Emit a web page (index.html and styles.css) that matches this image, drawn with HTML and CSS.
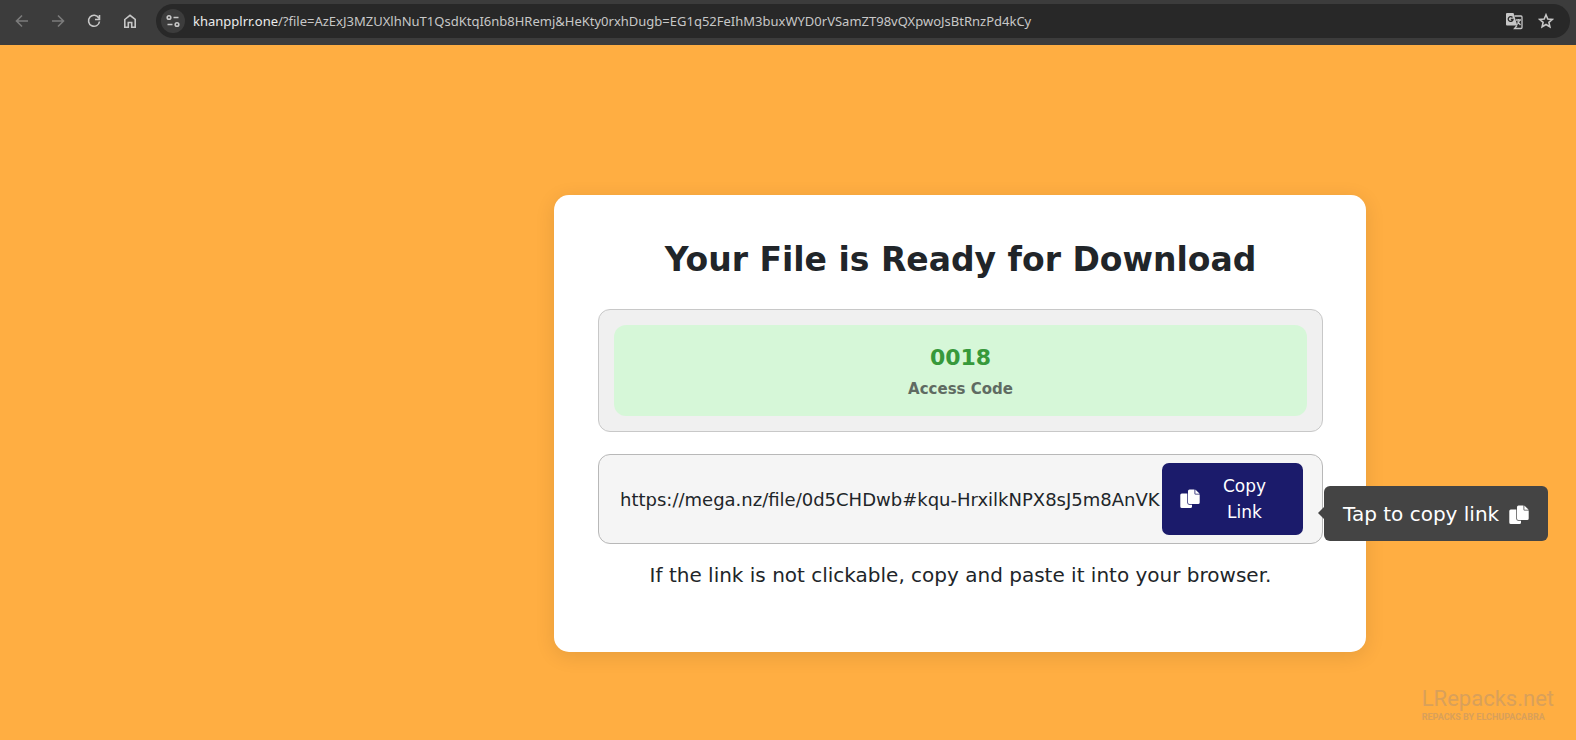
FILE: index.html
```html
<!DOCTYPE html>
<html lang="en">
<head>
<meta charset="utf-8">
<title>Your File is Ready for Download</title>
<link rel="stylesheet" href="styles.css">
</head>
<body>
<svg class="sprite" aria-hidden="true">
  <symbol id="copy" viewBox="0 0 20 20">
    <path fill="currentColor" d="M1.800 4.500H7.300V13.800a2 2 0 0 0 2 2H12v1.700a1.500 1.500 0 0 1-1.500 1.500H1.800A1.500 1.500 0 0 1 .3 17.500V6a1.500 1.500 0 0 1 1.500-1.500z"/>
    <path fill="currentColor" d="M9.500.500H14.500V4.500a1 1 0 0 0 1 1h4.200v8a1.500 1.500 0 0 1-1.500 1.500H9.500A1.500 1.500 0 0 1 8 13.500V2A1.500 1.500 0 0 1 9.500.500z"/>
    <path fill="currentColor" d="M15.300 .500L19.700 4.800H15.300z"/>
  </symbol>
</svg>
<header class="toolbar">
  <nav class="nav">
    <button class="nav-btn dim" aria-label="Back"><svg viewBox="0 0 16 16"><path d="M14 8H2.500M8 2.500L2.500 8 8 13.500"/></svg></button>
    <button class="nav-btn dim" aria-label="Forward"><svg viewBox="0 0 16 16"><path d="M2 8h11.500M8 2.500L13.500 8 8 13.500"/></svg></button>
    <button class="nav-btn" aria-label="Reload"><svg viewBox="0 0 16 16"><path d="M12.800 5A5.500 5.500 0 1 0 13.500 8.500M13.500 2v4.500H9"/></svg></button>
    <button class="nav-btn" aria-label="Home"><svg viewBox="0 0 16 16"><path d="M2.800 6.500L8 2.300l5.200 4.200v7.700h-3.500V9.500H6.300v4.700H2.800z"/></svg></button>
  </nav>
  <div class="address">
    <button class="site-info" aria-label="Site information"><svg viewBox="0 0 16 16"><circle cx="4" cy="4.500" r="1.800"/><path d="M8.500 4.500h5M2.500 11.500h5"/><circle cx="12" cy="11.500" r="1.800"/></svg></button>
    <span class="url"><span class="host">khanpplrr.one</span>/?file=AzExJ3MZUXlhNuT1QsdKtqI6nb8HRemj&amp;HeKty0rxhDugb=EG1q52FeIhM3buxWYD0rVSamZT98vQXpwoJsBtRnzPd4kCy</span>
    <button class="nav-btn" aria-label="Translate"><svg class="wide" viewBox="0 0 18 18"><path class="solid" d="M2 1h6.500l3.800 12.500H2A1 1 0 0 1 1 12.500V2a1 1 0 0 1 1-1z"/><path d="M9.500 4H16a1 1 0 0 1 1 1v10.500a1 1 0 0 1-1 1H9.500l2.500-3M11 8h5M13.500 7v1c2 0-.500 4-1.500 4.500M12.500 9.500l3 3.500"/><path class="cut" d="M7.500 5.500a2.400 2.400 0 1 0 .5 2H5.800"/></svg></button>
    <button class="nav-btn" aria-label="Bookmark this page"><svg viewBox="0 0 16 16"><path d="M8 1.800l1.800 4.200 4.500.400-3.400 3 1 4.400L8 11.500l-3.900 2.300 1-4.400-3.400-3 4.500-.400z"/></svg></button>
  </div>
</header>
<main class="page">
  <section class="card">
    <h1 class="title">Your File is Ready for Download</h1>
    <div class="code-box">
      <div class="code-panel">
        <strong class="code">0018</strong>
        <span class="code-label">Access Code</span>
      </div>
    </div>
    <div class="link-box">
      <input class="link-field" type="text" readonly aria-label="Download link" value="https://mega.nz/file/0d5CHDwb#kqu-HrxilkNPX8sJ5m8AnVK">
      <button class="copy-btn"><svg class="copy-icon"><use href="#copy"/></svg><span class="copy-text">Copy Link</span></button>
      <div class="tooltip" role="tooltip">Tap to copy link <svg class="copy-icon"><use href="#copy"/></svg></div>
    </div>
    <p class="hint">If the link is not clickable, copy and paste it into your browser.</p>
  </section>
  <div class="watermark">
    <span class="mark-name">LRepacks.net</span>
    <span class="mark-sub">REPACKS BY ELCHUPACABRA</span>
  </div>
</main>
</body>
</html>
```
FILE: styles.css
```css
* { box-sizing: border-box; }
body {
  margin: 0;
  min-height: 100vh;
  display: flex;
  flex-direction: column;
  background: #ffae42;
  color: #212529;
  font-family: Verdana, "DejaVu Sans", sans-serif;
}
button { border: 0; padding: 0; background: none; font: inherit; color: inherit; }
.sprite { display: none; }

.toolbar {
  display: flex;
  align-items: center;
  gap: 8px;
  height: 45px;
  padding: 0 6px 3px 12px;
  background: #3c3c3c;
  color: #c7c7c7;
}
.nav { display: flex; gap: 16px; }
.nav-btn { display: grid; place-items: center; width: 20px; height: 20px; }
.nav-btn svg, .site-info svg {
  width: 16px;
  height: 16px;
  fill: none;
  stroke: currentColor;
  stroke-width: 1.6;
}
.nav-btn .wide { width: 18px; height: 18px; stroke-width: 1.3; }
.nav-btn .solid { fill: currentColor; stroke: none; }
.nav-btn .cut { stroke: #282828; }
.dim { color: #7b7b7b; }
.address {
  flex: 1;
  min-width: 0;
  display: flex;
  align-items: center;
  gap: 12px;
  height: 34px;
  margin-left: 8px;
  padding: 0 14px 0 5px;
  border-radius: 17px;
  background: #282828;
}
.site-info {
  display: grid;
  place-items: center;
  flex: none;
  width: 24px;
  height: 24px;
  margin-right: -4px;
  border-radius: 50%;
  background: #3c3c3c;
}
.url {
  flex: 1;
  min-width: 0;
  overflow: hidden;
  white-space: nowrap;
  font: 13px/20px "Segoe UI", "Noto Sans", sans-serif;
}
.host { color: #ececec; }

.page {
  flex: 1;
  display: grid;
  grid-template-columns: 554fr 812fr 210fr;
  grid-template-rows: auto 1fr;
  padding-top: 150px;
}
.card {
  grid-column: 2;
  min-width: 0;
  padding: 44px 43px 62px 44px;
  border-radius: 15px;
  background: #fff;
  box-shadow: 0 4px 20px rgba(0, 0, 0, .1);
  text-align: center;
}
.title { margin: 0 0 28px; font-size: 33px; line-height: 42px; }
.code-box {
  margin-bottom: 22px;
  padding: 15px;
  border: 1px solid #c8c8c8;
  border-radius: 12px;
  background: #f0f0f0;
}
.code-panel {
  display: flex;
  flex-direction: column;
  gap: 4px;
  padding: 17px 16px 15px;
  border-radius: 12px;
  background: #d6f7d8;
}
.code { color: #37993b; font-size: 22px; line-height: 31px; }
.code-label { color: #5f6b62; font-size: 15px; font-weight: bold; line-height: 24px; }
.link-box {
  position: relative;
  display: flex;
  align-items: center;
  padding: 8px 19px 8px 21px;
  border: 1px solid #b8b8b8;
  border-radius: 12px;
  background: #f5f5f5;
}
.link-field {
  flex: 1;
  min-width: 0;
  height: 40px;
  padding: 0;
  border: 0;
  outline: 0;
  background: transparent;
  color: #212529;
  font: 18px/26px Verdana, "DejaVu Sans", sans-serif;
}
.copy-btn {
  display: flex;
  align-items: center;
  width: 141px;
  padding: 10px 18px;
  border-radius: 7px;
  background: #1b1b6b;
  color: #fff;
  font-size: 17px;
  line-height: 26px;
}
.copy-icon { flex: none; width: 20px; height: 20px; }
.copy-text { flex: 1; padding: 0 10px 0 14px; }
.tooltip {
  position: absolute;
  left: 100%;
  top: 31px;
  display: flex;
  align-items: center;
  gap: 10px;
  margin-left: 2px;
  padding: 13px 19px 11px;
  border-radius: 6px;
  background: #444;
  color: #fff;
  font-size: 20px;
  line-height: 31px;
  white-space: nowrap;
}
.tooltip::before {
  content: "";
  position: absolute;
  right: 100%;
  top: 21px;
  border: 6px solid transparent;
  border-left-width: 0;
  border-right-color: #444;
}
.hint { margin: 16px 0 0; font-size: 20px; line-height: 30px; }
.watermark {
  grid-column: 1 / -1;
  place-self: end;
  display: flex;
  flex-direction: column;
  padding: 0 22px 17px 0;
  color: #d9a05a;
  font-family: Roboto, sans-serif;
}
.mark-name { font-size: 22px; line-height: 24px; }
.mark-sub { font-size: 9px; line-height: 12px; font-weight: bold; }
```
